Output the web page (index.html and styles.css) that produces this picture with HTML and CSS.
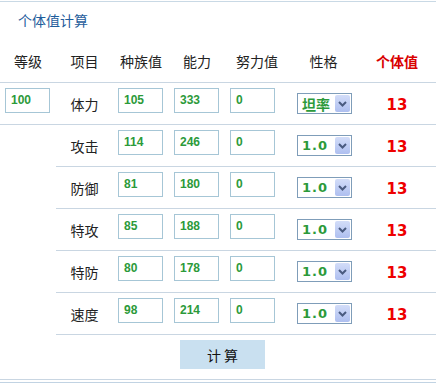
FILE: index.html
```html
<!DOCTYPE html>
<html>

<head>
	<meta charset="utf-8">
	<title>个体值计算</title>
	<link rel="stylesheet" href="styles.css">
</head>

<body>
	<div class="panel">
		<div class="title">个体值计算</div>

		<div class="row head">
			<div class="cell">等级</div>
			<div class="cell">项目</div>
			<div class="cell">种族值</div>
			<div class="cell">能力</div>
			<div class="cell">努力值</div>
			<div class="cell">性格</div>
			<div class="cell iv">个体值</div>
		</div>

		<div class="row">
			<div class="cell left"><span class="box">100</span></div>
			<div class="cell">体力</div>
			<div class="cell left"><span class="box">105</span></div>
			<div class="cell left"><span class="box">333</span></div>
			<div class="cell left"><span class="box">0</span></div>
			<div class="cell"><span class="sel"><span class="val cn">坦率</span><span class="arrow"><svg width="9" height="6" viewBox="0 0 9 6"><path d="M1 1 L4.5 4.5 L8 1" fill="none" stroke="#4a5b80" stroke-width="2"/></svg></span></span></div>
			<div class="cell res">13</div>
		</div>

		<div class="row sub">
			<div class="cell">攻击</div>
			<div class="cell left"><span class="box">114</span></div>
			<div class="cell left"><span class="box">246</span></div>
			<div class="cell left"><span class="box">0</span></div>
			<div class="cell"><span class="sel"><span class="val">1.0</span><span class="arrow"><svg width="9" height="6" viewBox="0 0 9 6"><path d="M1 1 L4.5 4.5 L8 1" fill="none" stroke="#4a5b80" stroke-width="2"/></svg></span></span></div>
			<div class="cell res">13</div>
		</div>

		<div class="row sub">
			<div class="cell">防御</div>
			<div class="cell left"><span class="box">81</span></div>
			<div class="cell left"><span class="box">180</span></div>
			<div class="cell left"><span class="box">0</span></div>
			<div class="cell"><span class="sel"><span class="val">1.0</span><span class="arrow"><svg width="9" height="6" viewBox="0 0 9 6"><path d="M1 1 L4.5 4.5 L8 1" fill="none" stroke="#4a5b80" stroke-width="2"/></svg></span></span></div>
			<div class="cell res">13</div>
		</div>

		<div class="row sub">
			<div class="cell">特攻</div>
			<div class="cell left"><span class="box">85</span></div>
			<div class="cell left"><span class="box">188</span></div>
			<div class="cell left"><span class="box">0</span></div>
			<div class="cell"><span class="sel"><span class="val">1.0</span><span class="arrow"><svg width="9" height="6" viewBox="0 0 9 6"><path d="M1 1 L4.5 4.5 L8 1" fill="none" stroke="#4a5b80" stroke-width="2"/></svg></span></span></div>
			<div class="cell res">13</div>
		</div>

		<div class="row sub">
			<div class="cell">特防</div>
			<div class="cell left"><span class="box">80</span></div>
			<div class="cell left"><span class="box">178</span></div>
			<div class="cell left"><span class="box">0</span></div>
			<div class="cell"><span class="sel"><span class="val">1.0</span><span class="arrow"><svg width="9" height="6" viewBox="0 0 9 6"><path d="M1 1 L4.5 4.5 L8 1" fill="none" stroke="#4a5b80" stroke-width="2"/></svg></span></span></div>
			<div class="cell res">13</div>
		</div>

		<div class="row sub">
			<div class="cell">速度</div>
			<div class="cell left"><span class="box">98</span></div>
			<div class="cell left"><span class="box">214</span></div>
			<div class="cell left"><span class="box">0</span></div>
			<div class="cell"><span class="sel"><span class="val">1.0</span><span class="arrow"><svg width="9" height="6" viewBox="0 0 9 6"><path d="M1 1 L4.5 4.5 L8 1" fill="none" stroke="#4a5b80" stroke-width="2"/></svg></span></span></div>
			<div class="cell res">13</div>
		</div>

		<div class="actions">
			<button class="calc">计 算</button>
		</div>
		<div class="rule"></div>
	</div>
</body>

</html>
```

FILE: styles.css
```css
body {
	margin: 0;
	background-color: #fff;
	font-family: "Noto Sans CJK SC", "DejaVu Sans", sans-serif;
	font-size: 14px;
	color: #222;
}

.panel {
	margin-top: 1px;
	border-top: 1px solid #c9d9e5;
	width: 436px;
}

.title {
	height: 38px;
	line-height: 36px;
	padding-left: 18px;
	color: #1f5d9c;
}

.row {
	display: grid;
	grid-template-columns: 56px 57px 56px 56px 64px 69px 78px;
	height: 41px;
	border-bottom: 1px solid #c9d6e2;
}

.row.head {
	height: 42px;
}

.row.sub {
	margin-left: 56px;
	grid-template-columns: 57px 56px 56px 64px 69px 78px;
}

.cell {
	display: flex;
	align-items: center;
	justify-content: center;
}

.cell.left {
	justify-content: flex-start;
	padding-left: 5px;
}

.iv {
	color: #d90000;
	font-weight: bold;
}

.box {
	box-sizing: border-box;
	width: 45px;
	height: 25px;
	margin-bottom: 6px;
	padding: 4px 0 0 5px;
	border: 1px solid #a6c6d6;
	font-family: "Liberation Sans", Arial, sans-serif;
	font-size: 12px;
	font-weight: bold;
	line-height: 14px;
	color: #2c9a3a;
}

.sel {
	box-sizing: border-box;
	display: flex;
	align-items: center;
	justify-content: space-between;
	width: 55px;
	height: 21px;
	margin-left: 2px;
	border: 1px solid #7f9db9;
	background-color: #fff;
}

.val {
	padding-left: 4px;
	font-family: "DejaVu Sans", Verdana, sans-serif;
	font-size: 13px;
	font-weight: bold;
	letter-spacing: 1px;
	color: #2c9a3a;
}

.val.cn {
	font-family: "Noto Sans CJK SC", sans-serif;
	font-size: 14px;
	letter-spacing: 0;
}

.arrow {
	display: flex;
	align-items: center;
	justify-content: center;
	width: 15px;
	height: 17px;
	margin-right: 1px;
	border-radius: 2px;
	background: linear-gradient(#d3ddf8, #aebff0);
}

.res {
	font-family: "DejaVu Sans", Verdana, sans-serif;
	font-size: 15px;
	font-weight: bold;
	color: #ee0000;
	padding-top: 2px;
}

.actions {
	height: 45px;
	padding-left: 180px;
	box-sizing: border-box;
	padding-top: 5px;
	border-bottom: 1px solid #c9d6e2;
}

.calc {
	width: 85px;
	height: 29px;
	border: none;
	background-color: #c9e0f0;
	font-family: "Noto Sans CJK SC", sans-serif;
	font-size: 14px;
	color: #111;
	padding: 0;
}

.rule {
	margin-top: 2px;
	height: 1px;
	background-color: #c1d3e3;
}
```
